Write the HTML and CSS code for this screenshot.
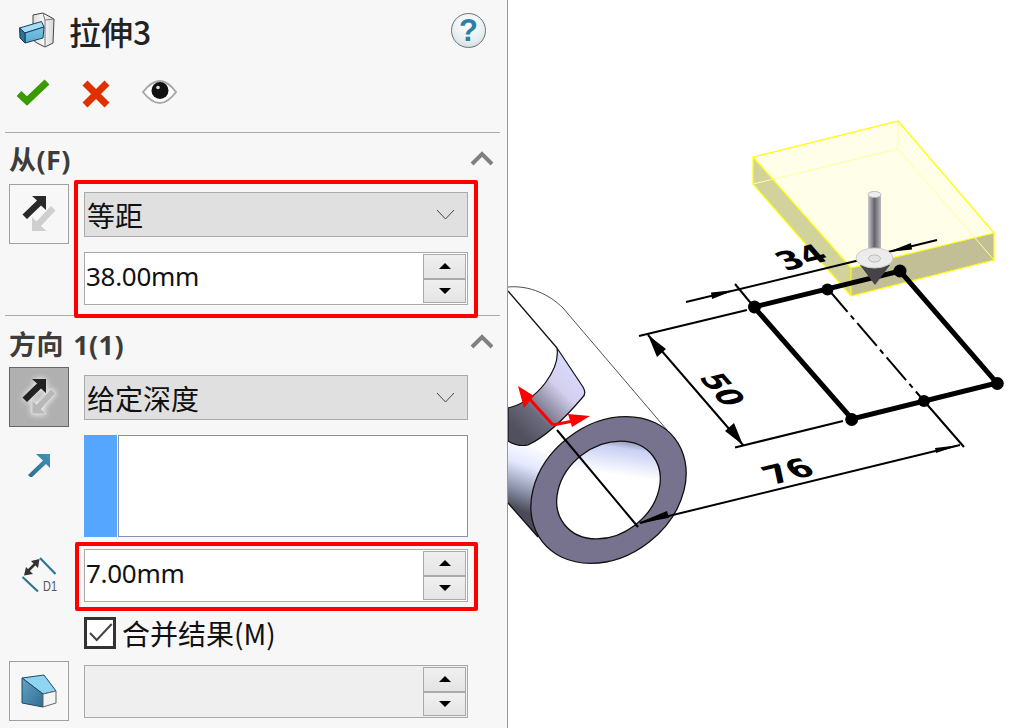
FILE: index.html
```html
<!DOCTYPE html>
<html lang="zh">
<head>
<meta charset="utf-8">
<title>拉伸3</title>
<link rel="stylesheet" href="styles.css">
</head>
<body>
<div class="app">
  <aside class="panel">
    <header class="titlebar">
      <svg class="title-icon" width="38" height="38" viewBox="19 11 38 38">
        <defs>
          <linearGradient id="plate" x1="0" y1="0" x2="1" y2="0"><stop offset="0" stop-color="#dcdcdc"/><stop offset=".45" stop-color="#f8f8f8"/><stop offset="1" stop-color="#d8d8d8"/></linearGradient>
          <linearGradient id="boxFront" x1="0" y1="0" x2="0" y2="1"><stop offset="0" stop-color="#7cc6e8"/><stop offset="1" stop-color="#5aa8d0"/></linearGradient>
        </defs>
        <path d="M33 15 43 13 54 19 53 43 45 47 37 43 33 40Z" fill="url(#plate)" stroke="#444" stroke-width="1"/>
        <path d="M43 13.500 45 20V46M45 20 54 19" fill="none" stroke="#777" stroke-width="1"/>
        <path d="M19.500 28 41.500 21.500 44 27 25 33Z" fill="#a8def5" stroke="#173f5a" stroke-width="1"/>
        <path d="M25 33 44 27 43 38 25 43Z" fill="url(#boxFront)" stroke="#173f5a" stroke-width="1"/>
        <path d="M19.500 28 25 33V43L20 38Z" fill="#2f7398" stroke="#173f5a" stroke-width="1"/>
      </svg>
      <h1 class="title">拉伸3</h1>
      <div class="help">?</div>
    </header>
    <div class="actions">
      <svg class="act-ok" width="36" height="30" viewBox="14 78 36 30"><path d="M19 93.500 27 101 47 82" fill="none" stroke="#3a9a00" stroke-width="7"/></svg>
      <svg class="act-no" width="30" height="30" viewBox="81 78 30 30"><path d="M85 83 107 105M107 83 85 105" fill="none" stroke="#e03000" stroke-width="7"/></svg>
      <svg class="act-eye" width="38" height="28" viewBox="141 78 38 28">
        <path d="M143 92Q160 70 176 92 160 114 143 92Z" fill="#fff" stroke="#a8a8a8" stroke-width="2"/>
        <circle cx="160" cy="90.500" r="8.500" fill="#111"/>
        <circle cx="158" cy="87.500" r="1.800" fill="#ddd"/>
      </svg>
    </div>

    <section class="section">
      <div class="sec-head">
        <h2 class="sec-title">从(F)</h2>
        <svg class="chev" width="24" height="16" viewBox="0 0 24 16"><path d="M2 14 12 4 22 14" fill="none" stroke="#808080" stroke-width="4"/></svg>
      </div>
      <div class="row">
        <button class="tool">
          <svg width="58" height="58" viewBox="10 185 58 58">
            <path d="M32 231V217L36.500 221.500 51 206 55.500 210.500 41 226 46.500 231Z" fill="#cfcfcf"/>
            <path d="M46 196V210L41 205.500 27 219 22.500 214.500 37 200.500 32 196Z" fill="#2a2a2a"/>
          </svg>
        </button>
        <div class="stack highlighted">
          <div class="select"><span>等距</span><svg class="sel-chev" width="19" height="11" viewBox="0 0 19 11"><path d="M1 1 9.500 10 18 1" fill="none" stroke="#444"/></svg></div>
          <div class="spin-field">
            <span class="value">38.00mm</span>
            <div class="spinner"><div class="spin-btn"><i class="tri-up"></i></div><div class="spin-btn"><i class="tri-down"></i></div></div>
          </div>
          <div class="redbox redbox-from"></div>
        </div>
      </div>
    </section>

    <section class="section section-dir">
      <div class="sec-head">
        <h2 class="sec-title">方向 1(1)</h2>
        <svg class="chev" width="24" height="16" viewBox="0 0 24 16"><path d="M2 14 12 4 22 14" fill="none" stroke="#808080" stroke-width="4"/></svg>
      </div>
      <div class="row">
        <button class="tool tool-on">
          <svg class="glow" width="58" height="58" viewBox="10 368 58 58">
            <path d="M32 414V400L36.500 404.500 51 389 55.500 393.500 41 409 46.500 414Z" fill="#b8b8b8" stroke="#d8d8d8"/>
            <path d="M46 379V393L41 388.500 27 402 22.500 397.500 37 383.500 32 379Z" fill="#222"/>
          </svg>
        </button>
        <div class="stack"><div class="select"><span>给定深度</span><svg class="sel-chev" width="19" height="11" viewBox="0 0 19 11"><path d="M1 1 9.500 10 18 1" fill="none" stroke="#444"/></svg></div></div>
      </div>
      <div class="row row-list">
        <div class="cell-icon">
          <svg width="26" height="26" viewBox="26 451 26 26">
            <defs><linearGradient id="teal" x1="0" y1="1" x2="1" y2="0"><stop offset="0" stop-color="#2a6d90"/><stop offset="1" stop-color="#3f93b8"/></linearGradient></defs>
            <path d="M50 454V468L46 464 31 478 28 475 43 460.500 36 454Z" fill="url(#teal)"/>
          </svg>
        </div>
        <div class="listbox"><div class="swatch"></div><div class="list-body"></div></div>
      </div>
      <div class="row row-depth">
        <div class="cell-icon">
          <svg class="d1-icon" width="40" height="40" viewBox="19 556 40 40">
            <path d="M40 558 55.500 574M22.500 577 38 591.500" fill="none" stroke="#2f7596" stroke-width="2.200"/>
            <path d="M26 573 37 562" fill="none" stroke="#333" stroke-width="2.500"/>
            <path d="M39.500 559 38 568 31 561ZM24 575.500 33 574 26 567Z" fill="#333"/>
            <text class="d1" x="43" y="590.500" textLength="14" lengthAdjust="spacingAndGlyphs">D1</text>
          </svg>
        </div>
        <div class="stack">
          <div class="spin-field">
            <span class="value">7.00mm</span>
            <div class="spinner"><div class="spin-btn"><i class="tri-up"></i></div><div class="spin-btn"><i class="tri-down"></i></div></div>
          </div>
          <div class="redbox redbox-depth"></div>
        </div>
      </div>
      <label class="check-row">
        <span class="check"><svg width="26" height="26" viewBox="87 620 26 26"><path d="M90 633 96.700 640 111.700 624" fill="none" stroke="#444" stroke-width="2"/></svg></span>
        <span class="check-label">合并结果(M)</span>
      </label>
      <div class="row row-bottom">
        <button class="tool">
          <svg width="58" height="58" viewBox="10 662 58 58">
            <defs><linearGradient id="bevel" x1="0" y1="0" x2="1" y2="1"><stop offset="0" stop-color="#66a3c4"/><stop offset="1" stop-color="#2f6f94"/></linearGradient></defs>
            <path d="M22 678 44 675 56 691 43 694Z" fill="#8fd4f0" stroke="#1d4a66"/>
            <path d="M22 678 43 694V707L22 703Z" fill="url(#bevel)" stroke="#1d4a66"/>
            <path d="M43 694 56 691V703L43 707Z" fill="#f4f4f4" stroke="#666"/>
          </svg>
        </button>
        <div class="stack">
          <div class="spin-field spin-disabled">
            <span class="value"></span>
            <div class="spinner"><div class="spin-btn"><i class="tri-up"></i></div><div class="spin-btn"><i class="tri-down"></i></div></div>
          </div>
        </div>
      </div>
    </section>
  </aside>

  <svg class="canvas" width="509" height="728" viewBox="508 0 509 728">
    <defs>
      <linearGradient id="tubeG" gradientUnits="userSpaceOnUse" x1="548" y1="448" x2="525" y2="512"><stop offset="0" stop-color="#fff"/><stop offset=".35" stop-color="#e4e8ff"/><stop offset=".7" stop-color="#9098b0"/><stop offset="1" stop-color="#4a4a58"/></linearGradient>
      <linearGradient id="notchG" gradientUnits="userSpaceOnUse" x1="515" y1="430" x2="575" y2="370"><stop offset="0" stop-color="#50505e"/><stop offset=".3" stop-color="#6a6a7c"/><stop offset=".55" stop-color="#a8a4c0"/><stop offset=".72" stop-color="#d4cfee"/><stop offset="1" stop-color="#d8d8ff"/></linearGradient>
      <linearGradient id="holeG" gradientUnits="userSpaceOnUse" x1="652" y1="450" x2="600" y2="500"><stop offset="0" stop-color="#50505c"/><stop offset=".08" stop-color="#8488a0"/><stop offset=".22" stop-color="#c8d0f4"/><stop offset=".6" stop-color="#fff"/></linearGradient>
      <linearGradient id="shaftG" x1="0" y1="0" x2="1" y2="0"><stop offset="0" stop-color="#c8c8cc"/><stop offset=".5" stop-color="#66626c"/><stop offset="1" stop-color="#b8b8bc"/></linearGradient>
    </defs>

    <!-- tube -->
    <path d="M508 441Q518 447 528 445L608 490 538 537 508 503Z" fill="url(#tubeG)"/>
    <path d="M508 503 538 537" class="edge"/>
    <path d="M508 287C530 285 550 295 563 308L667 430" class="edge-thin"/>
    <path d="M508 291 557 348" class="edge"/>
    <path d="M557 348C560 368 540 400 508 408V441Q518 447 528 445C545 437 565 418 582 398Q587 394 583 387Z" fill="url(#notchG)" stroke="#111" stroke-width="1.200"/>
    <ellipse cx="608.500" cy="490" rx="84" ry="66" transform="rotate(-38 608.500 490)" fill="#77738e" stroke="#111" stroke-width="1.300"/>
    <ellipse cx="608.500" cy="490" rx="56" ry="44" transform="rotate(-38 608.500 490)" fill="url(#holeG)" stroke="#111" stroke-width="1.300"/>

    <!-- yellow preview -->
    <path d="M753 157 851 268 851 296 753 184Z" fill="#d2d29c"/>
    <path d="M851 268 994 233 994 260 851 296Z" fill="#c2bf96"/>
    <path d="M753 157 898 121 994 233 851 268Z" fill="#ffffe9"/>
    <path d="M753 184 898 149 994 260M898 121V149" class="y-pale"/>
    <path d="M753 157 898 121 994 233 851 268ZM753 157V184L851 296 994 260V233M851 268V296" class="y-line"/>

    <!-- sketch -->
    <path d="M754 307 900 271 997 383 852 419Z" class="sketch"/>
    <path d="M828 289 924 401" class="center"/>
    <circle cx="754.500" cy="307" r="6.500"/><circle cx="827.500" cy="289.500" r="6"/><circle cx="900" cy="271" r="6.500"/>
    <circle cx="851.700" cy="419.500" r="6.500"/><circle cx="924" cy="401" r="6"/><circle cx="997.300" cy="383.500" r="6.500"/>

    <!-- dimensions -->
    <path d="M686 302 860 260M888 252 937 240M735 284 754 307M639 336 747 310M735 447.500 843 421M648 335 743 445M924 401 964 447M640 523 960 445M557 430 638 527" class="dim"/>
    <path d="M735 290 711 292.500 712 299ZM888 252 911 243 912 249.500ZM648 335 666 349 657 357ZM743 445 725 431 734 423ZM638 523 667 511 669 518ZM960 445 935 448 936 453Z" fill="#000"/>
    <text class="dimtext" transform="matrix(1.1 -.275 .7 .8 786 271)">34</text>
    <text class="dimtext" transform="matrix(.66 .75 -1.1 .28 698 377)">50</text>
    <text class="dimtext" transform="matrix(1.1 -.275 .7 .8 773 485)">76</text>

    <!-- manipulator -->
    <path d="M860 265H890L875 285Z" fill="#46434a"/>
    <rect x="868" y="194" width="13" height="58" fill="url(#shaftG)"/>
    <ellipse cx="874.500" cy="194.500" rx="6.500" ry="3" fill="#eee" stroke="#bbb"/>
    <ellipse cx="874.500" cy="258" rx="18.500" ry="10" fill="#ececec" stroke="#ccc"/>
    <ellipse cx="874.500" cy="258.500" rx="6" ry="3.500" fill="#e4e4e4" stroke="#bbb"/>

    <!-- reference triad -->
    <path d="M553 425 526 395M553 425 578 420" fill="none" stroke="#f00" stroke-width="3"/>
    <path d="M518 386 534 396 524 408ZM590 416 568 414 572 427Z" fill="#f00"/>
  </svg>
</div>
</body>
</html>
```
FILE: styles.css
```css
* { box-sizing: border-box; }
html, body { margin: 0; padding: 0; height: 100%; overflow: hidden; background: #fff; }
body { font-family: "Noto Sans", "Noto Sans CJK SC", sans-serif; color: #111; }

.app { display: flex; width: 1017px; height: 728px; }
.panel { width: 508px; flex: none; background: #f7f7f7; border-right: 1px solid #999; overflow: hidden; }
.canvas { flex: none; display: block; background: #fff; }

.titlebar { height: 60px; display: flex; align-items: center; padding: 0 21px 0 19px; }
.title-icon { flex: none; }
.title { margin: 0 0 0 12px; font: 500 32px/1 "Noto Sans CJK SC", sans-serif; color: #222; position: relative; top: 1px; }
.help {
  margin-left: auto; width: 35px; height: 35px; border-radius: 50%;
  border: 1.5px solid #65757c;
  background: radial-gradient(circle at 50% 30%, #ffffff, #e8eef0 60%, #c8d2d6);
  color: #2b7ea8; font: 700 31px/33px "Liberation Sans", sans-serif; text-align: center;
}

.actions { height: 72px; display: flex; align-items: flex-start; padding: 18px 0 0 14px; }
.act-no { margin-left: 31px; }
.act-eye { margin-left: 30px; }

.section { margin: 0 7px 0 5px; border-top: 1px solid #aaa; height: 183px; }
.section-dir { height: 413px; }
.sec-head { height: 51px; display: flex; align-items: center; justify-content: space-between; padding: 0 6px 0 4px; }
.sec-title { margin: 0; font: 700 27px/1 "Noto Sans", "Noto Sans CJK SC", sans-serif; color: #3c3c3c; white-space: pre; letter-spacing: .4px; word-spacing: 2px; position: relative; top: 1px; }
.section-dir .sec-title { top: 3px; }
.chev { position: relative; top: -1px; }

.row { display: grid; grid-template-columns: 60px 384px; column-gap: 15px; padding-left: 4px; align-items: start; }
.row-list { margin-top: 8px; }
.row-depth { margin-top: 12px; }
.row-bottom { margin-top: 12px; }
.row-bottom .stack { padding-top: 4px; }

.tool { width: 60px; height: 60px; padding: 0; margin: 0; display: block; border: 1px solid #a0a0a0; background: #f7f7f7; }
.tool svg { display: block; margin: 0; }
.tool-on { background: #b0b0b0; border-color: #666; }
.glow { filter: drop-shadow(0 0 3px #fff); }
.cell-icon { display: flex; justify-content: center; }
.row-list .cell-icon { padding-top: 16px; }
.row-depth .cell-icon { padding-top: 7px; }
.d1-icon { overflow: visible; }

.stack { position: relative; display: flex; flex-direction: column; gap: 15px; padding-top: 8px; }
.row-depth .stack { padding-top: 0; }
.select {
  height: 45px; border: 1px solid #aaa; background: #e0e0e0;
  display: flex; align-items: center; justify-content: space-between; padding: 0 12px 0 3px;
  font: 400 28px/1 "Noto Sans CJK SC", sans-serif;
}
.select span { position: relative; top: 0; left: -1px; }

.spin-field {
  height: 53px; border: 1px solid #aaa; background: #fff;
  display: flex; align-items: center; justify-content: space-between; padding: 1px 1px 1px 1px;
}
.spin-disabled { background: #efefef; }
.value { font: 400 26px/1 "Noto Sans", sans-serif; letter-spacing: -.3px; position: relative; top: -3px; }
.spinner { width: 43px; height: 49px; display: flex; flex-direction: column; }
.spin-btn {
  flex: 1; border: 1px solid #aaa; background: linear-gradient(#f0f0f0, #e4e4e4);
  display: flex; align-items: center; justify-content: center;
}
.tri-up, .tri-down { width: 0; height: 0; border-left: 6px solid transparent; border-right: 6px solid transparent; }
.tri-up { border-bottom: 6px solid #000; }
.tri-down { border-top: 6px solid #000; }

.redbox { position: absolute; border: 4px solid #f00; border-radius: 2px; pointer-events: none; }
.redbox-from { left: -10px; right: -10px; top: -4px; bottom: -13px; }
.redbox-depth { left: -9px; right: -10px; top: -7px; bottom: -9px; }

.listbox { height: 102px; display: flex; gap: 1px; }
.swatch { width: 33px; background: #55a6ff; }
.list-body { flex: 1; background: #fff; border: 1px solid #8a90a8; }

.check-row { display: flex; align-items: center; height: 32px; margin: 15px 0 0 79px; }
.check { width: 32px; height: 32px; border: 3px solid #333; background: #fff; flex: none; }
.check svg { display: block; }
.check-label { margin-left: 6px; font: 400 28px/1 "Noto Sans CJK SC", sans-serif; }

.d1 { font: 400 15px "Liberation Sans", sans-serif; fill: #555; }
.edge { fill: none; stroke: #111; stroke-width: 1.3; }
.edge-thin { fill: none; stroke: #222; stroke-width: .8; }
.y-line { fill: none; stroke: #ffff00; stroke-width: 1.2; }
.y-pale { fill: none; stroke: #ffff99; stroke-width: 1; }
.sketch { fill: none; stroke: #000; stroke-width: 5; }
.center { fill: none; stroke: #000; stroke-width: 2; stroke-dasharray: 30 5 5 5; }
.dim { fill: none; stroke: #000; stroke-width: 2; }
.dimtext { font: 700 29px "DejaVu Sans", sans-serif; fill: #000; }
```
